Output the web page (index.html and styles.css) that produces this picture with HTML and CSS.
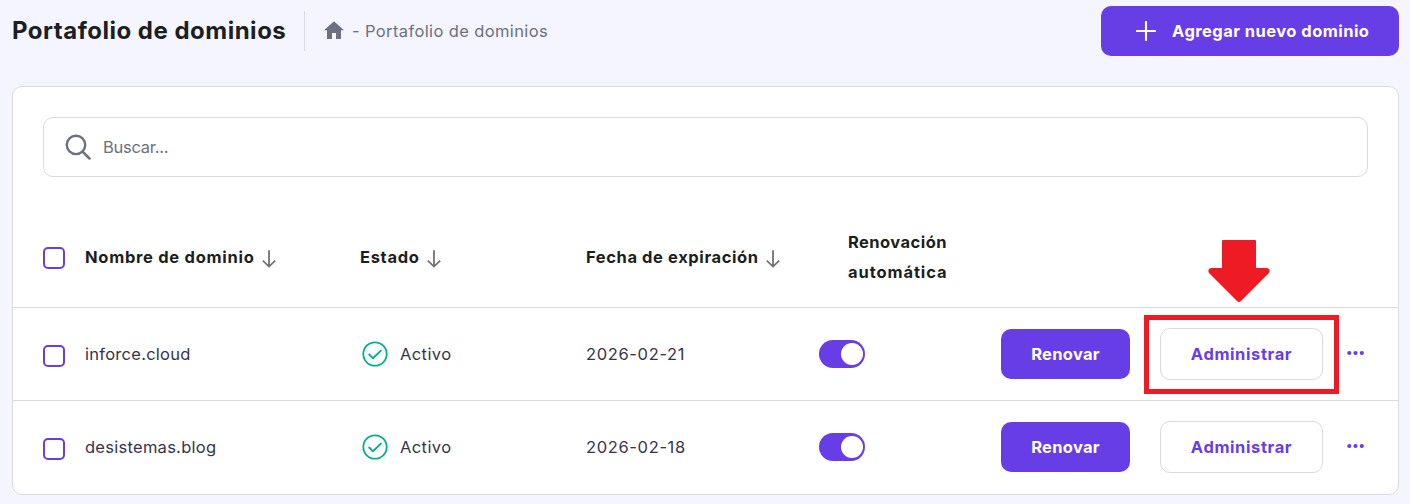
FILE: index.html
```
<!DOCTYPE html>
<html lang="es">
<head>
<meta charset="utf-8">
<title>Portafolio de dominios</title>
<link rel="stylesheet" href="styles.css">
</head>
<body>
<svg class="sprite" aria-hidden="true">
  <symbol id="arrow" viewBox="0 0 16 20"><path d="M8 1.2v16.200M1.8 11.600 8 17.600l6.200-6" fill="none" stroke="currentColor" stroke-width="1.8"/></symbol>
  <symbol id="check" viewBox="0 0 26 26"><circle cx="13" cy="13" r="11.700" fill="none" stroke="currentColor" stroke-width="1.8"/><path d="m7.200 13.500 3.800 3.800 7.900-7.700" fill="none" stroke="currentColor" stroke-width="1.9" stroke-linecap="round" stroke-linejoin="round"/></symbol>
  <symbol id="dots" viewBox="0 0 18 6"><circle cx="2.300" cy="3" r="2.100"/><circle cx="8.500" cy="3" r="2.100"/><circle cx="14.800" cy="3" r="2.100"/></symbol>
</svg>
<header class="topbar">
  <h1 class="title"><span class="t">Portafolio de dominios</span></h1>
  <nav class="crumbs">
    <svg class="home" viewBox="0 0 20 18"><path d="M10 .2 0 9.300h3V18h5v-6h4v6h5V9.300h3z" fill="currentColor"/></svg>
    <span class="t t-crumb">- Portafolio de dominios</span>
  </nav>
  <button class="btn btn-primary btn-add">
    <svg class="plus" viewBox="0 0 20 20"><path d="M10 1v18M1 10h18" stroke="currentColor" stroke-width="2.100" stroke-linecap="round"/></svg>
    <span class="t t-add">Agregar nuevo dominio</span>
  </button>
</header>
<main class="card">
  <div class="search">
    <svg class="lens" viewBox="0 0 26 26"><circle cx="11" cy="10.900" r="9.200" fill="none" stroke="currentColor" stroke-width="2.400"/><path d="m17.600 17.600 6.900 6.900" stroke="currentColor" stroke-width="2.500" stroke-linecap="round"/></svg>
    <span class="t t-search">Buscar...</span>
  </div>
  <div class="row head">
    <i class="box"></i>
    <div class="cell"><span class="t t-name">Nombre de dominio</span><svg class="arrow"><use href="#arrow"/></svg></div>
    <div class="cell"><span class="t t-status">Estado</span><svg class="arrow"><use href="#arrow"/></svg></div>
    <div class="cell"><span class="t t-expiry">Fecha de expiración</span><svg class="arrow"><use href="#arrow"/></svg></div>
    <div class="renew"><span class="t t-renewal">Renovación</span><br><span class="t t-auto">automática</span></div>
  </div>
  <div class="row">
    <i class="box"></i>
    <div class="cell"><span class="t t-domain">inforce.cloud</span></div>
    <div class="cell"><svg class="check"><use href="#check"/></svg><span class="t t-active">Activo</span></div>
    <div class="cell"><span class="t t-date">2026-02-21</span></div>
    <div class="cell"><i class="toggle"></i></div>
    <button class="btn btn-primary btn-renew"><span class="t t-renew">Renovar</span></button>
    <div class="manage">
      <button class="btn btn-outline"><span class="t t-manage">Administrar</span></button>
      <div class="callout"><svg class="pointer" viewBox="0 0 62 62"><path d="M15 0h32q1 0 1 1v27h11q4 1 2 5L33 61q-2 2-4 0L1 33q-2-4 2-5h11V1q0-1 1-1z" fill="#ed1c24"/></svg></div>
    </div>
    <svg class="dots"><use href="#dots"/></svg>
  </div>
  <div class="row">
    <i class="box"></i>
    <div class="cell"><span class="t t-domain">desistemas.blog</span></div>
    <div class="cell"><svg class="check"><use href="#check"/></svg><span class="t t-active">Activo</span></div>
    <div class="cell"><span class="t t-date">2026-02-18</span></div>
    <div class="cell"><i class="toggle"></i></div>
    <button class="btn btn-primary btn-renew"><span class="t t-renew">Renovar</span></button>
    <div class="manage"><button class="btn btn-outline"><span class="t t-manage">Administrar</span></button></div>
    <svg class="dots"><use href="#dots"/></svg>
  </div>
</main>
</body>
</html>
```
FILE: styles.css
```
* { box-sizing: border-box; }
body {
  margin: 0;
  height: 504px;
  padding: 6px 11px 9px 12px;
  overflow: hidden;
  background: #f4f5ff;
  color: #36344d;
  font: 400 16.5px/30px Inter, "Liberation Sans", sans-serif;
}
.sprite { position: absolute; width: 0; height: 0; }
.t { white-space: nowrap; }
.topbar { display: flex; height: 50px; align-items: center; margin-bottom: 30px; }
.title { margin: 0; width: 293px; height: 40px; border-right: 1px solid #d8dae0; color: #1d1e20; font-size: 24px; font-weight: 700; line-height: 40px; letter-spacing: .5px; }
.crumbs { display: flex; align-items: center; flex: 1; padding-left: 19px; color: #6d7081; }
.home { width: 20px; height: 18px; margin-right: 8px; margin-bottom: 3px; }
.t-crumb { letter-spacing: .38px; }
.btn { display: flex; align-items: center; justify-content: center; height: 50px; padding: 0; border: 0; border-radius: 10px; font: inherit; font-weight: 700; }
.btn-primary { background: #673de6; color: #fff; }
.btn-add { width: 298px; justify-content: flex-start; padding-left: 35px; }
.plus { width: 20px; height: 20px; margin-right: 16px; }
.t-add { letter-spacing: .46px; }
.card { height: 409px; border: 1px solid #d8dae0; border-radius: 10px; background: #fff; padding-top: 30px; }
.search { display: flex; align-items: center; height: 60px; margin: 0 30px 30px; padding-left: 21px; border: 1px solid #d8dae0; border-radius: 10px; color: #6d7081; }
.lens { width: 26px; height: 26px; margin-right: 12px; }
.t-search { letter-spacing: -.25px; }
.row { display: grid; grid-template-columns: 42px 275px 226px 233px 182px 159px 187px 18px; align-items: center; height: 93px; padding-left: 30px; border-top: 1px solid #d8dae0; }
.head { height: 100px; border-top: 0; color: #1d1e20; font-weight: 700; }
.cell { display: flex; align-items: center; }
.box { width: 22px; height: 22px; border: 2px solid #673de6; border-radius: 5px; margin-top: 3px; }
.head .box { margin-top: 2px; }
.arrow { width: 16px; height: 20px; margin: 3px 0 0 6px; color: #727272; }
.t-name { letter-spacing: .72px; }
.t-status { letter-spacing: .67px; }
.t-expiry { letter-spacing: .6px; }
.renew { padding-left: 29px; }
.t-renewal { letter-spacing: .45px; }
.t-auto { letter-spacing: .9px; }
.t-domain { letter-spacing: .27px; }
.t-active { letter-spacing: .4px; }
.t-date { letter-spacing: .65px; }
.check { width: 26px; height: 26px; margin: 0 12px 0 2px; color: #00b090; }
.toggle { width: 46px; height: 28px; padding: 3px 2px; border-radius: 14px; background: #673de6; }
.toggle::before { content: ""; display: block; width: 22px; height: 22px; margin-left: auto; border-radius: 50%; background: #fff; }
.btn-renew { width: 129px; }
.t-renew { letter-spacing: .3px; }
.manage { position: relative; width: 163px; }
.btn-outline { width: 163px; height: 52px; border: 1px solid #d8dae0; background: #fff; color: #673de6; }
.t-manage { letter-spacing: .6px; }
.manage:has(.callout) .btn-outline { background: transparent; }
.callout { position: absolute; left: -16px; top: -13px; width: 195px; height: 79px; border: 5px solid #ed1c24; }
.pointer { position: absolute; left: 59px; top: -80px; width: 62px; height: 62px; }
.dots { width: 18px; height: 6px; margin-bottom: 3px; fill: #673de6; }
```
